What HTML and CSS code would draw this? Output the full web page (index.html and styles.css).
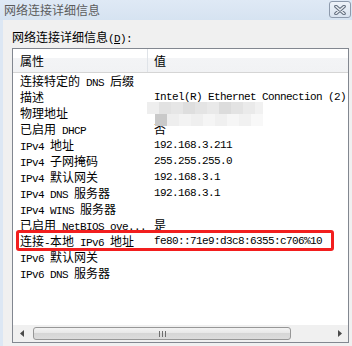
FILE: index.html
```html
<!DOCTYPE html>
<html lang="zh-CN">
<head>
    <meta charset="UTF-8">
    <title>网络连接详细信息</title>
    <link rel="stylesheet" href="styles.css">
</head>
<body>
<div class="window">
    <div class="titlebar">
        <span class="title">网络连接详细信息</span>
        <button class="close">
            <svg width="12" height="10" viewBox="0 0 12 10">
                <path d="M2 1.5 L10 8.5 M10 1.5 L2 8.5" stroke="#5f6b7b" stroke-width="3.6" stroke-linecap="round"/>
                <path d="M2 1.5 L10 8.5 M10 1.5 L2 8.5" stroke="#e9edf2" stroke-width="1.6" stroke-linecap="round"/>
            </svg>
        </button>
    </div>
    <div class="client">
        <div class="label">网络连接详细信息<span class="en">(<u>D</u>):</span></div>
        <div class="list">
            <div class="head">
                <div class="c1">属性</div>
                <div class="c2">值</div>
            </div>
            <div class="rows">
                <div class="row"><div class="name">连接特定的<span class="en"> DNS </span>后缀</div><div class="val"></div></div>
                <div class="row"><div class="name">描述</div><div class="val en">Intel(R) Ethernet Connection (2)</div></div>
                <div class="row"><div class="name">物理地址</div><div class="val"></div></div>
                <div class="row"><div class="name">已启用<span class="en"> DHCP</span></div><div class="val">否</div></div>
                <div class="row"><div class="name"><span class="en">IPv4 </span>地址</div><div class="val en">192.168.3.211</div></div>
                <div class="row"><div class="name"><span class="en">IPv4 </span>子网掩码</div><div class="val en">255.255.255.0</div></div>
                <div class="row"><div class="name"><span class="en">IPv4 </span>默认网关</div><div class="val en">192.168.3.1</div></div>
                <div class="row"><div class="name"><span class="en">IPv4 DNS </span>服务器</div><div class="val en">192.168.3.1</div></div>
                <div class="row"><div class="name"><span class="en">IPv4 WINS </span>服务器</div><div class="val"></div></div>
                <div class="row"><div class="name">已启用<span class="en"> NetBIOS ove...</span></div><div class="val">是</div></div>
                <div class="row"><div class="name">连接<span class="en">-</span>本地<span class="en"> IPv6 </span>地址</div><div class="val en">fe80::71e9:d3c8:6355:c706%10</div></div>
                <div class="row"><div class="name"><span class="en">IPv6 </span>默认网关</div><div class="val"></div></div>
                <div class="row"><div class="name"><span class="en">IPv6 DNS </span>服务器</div><div class="val"></div></div>
            </div>
            <div class="hscroll">
                <div class="arrow">
                    <svg width="4" height="7" viewBox="0 0 4 7"><path d="M4 0 L0 3.5 L4 7 Z" fill="#4a4a4a"/></svg>
                </div>
                <div class="thumb">
                    <svg width="7" height="6" viewBox="0 0 7 6"><path d="M0 0h1v6H0z M3 0h1v6H3z M6 0h1v6H6z" fill="#6e6e6e"/></svg>
                </div>
                <div class="track"></div>
                <div class="arrow">
                    <svg width="4" height="7" viewBox="0 0 4 7"><path d="M0 0 L4 3.5 L0 7 Z" fill="#4a4a4a"/></svg>
                </div>
            </div>

            <!-- blurred MAC address -->
            <svg class="mosaic" width="116" height="24" viewBox="0 0 116 24">
                <rect x="0" y="0" width="12" height="12" fill="#eeeeee"/>
                <rect x="12" y="0" width="12" height="12" fill="#e2e2e2"/>
                <rect x="24" y="0" width="12" height="12" fill="#e6e6e6"/>
                <rect x="36" y="0" width="12" height="12" fill="#dedede"/>
                <rect x="48" y="0" width="12" height="12" fill="#e4e4e4"/>
                <rect x="60" y="0" width="12" height="12" fill="#e9e9e9"/>
                <rect x="72" y="0" width="12" height="12" fill="#dcdcdc"/>
                <rect x="84" y="0" width="12" height="12" fill="#e3e3e3"/>
                <rect x="96" y="0" width="12" height="12" fill="#eaeaea"/>
                <rect x="108" y="0" width="8" height="12" fill="#f1f1f1"/>
                <rect x="8" y="12" width="12" height="12" fill="#c9c9c9"/>
                <rect x="20" y="12" width="12" height="12" fill="#eeeeee"/>
                <rect x="32" y="12" width="12" height="12" fill="#f3f3f3"/>
                <rect x="44" y="12" width="12" height="12" fill="#efefef"/>
                <rect x="56" y="12" width="12" height="12" fill="#f5f5f5"/>
                <rect x="68" y="12" width="12" height="12" fill="#f0f0f0"/>
                <rect x="80" y="12" width="12" height="12" fill="#f6f6f6"/>
                <rect x="92" y="12" width="12" height="12" fill="#f1f1f1"/>
                <rect x="104" y="12" width="12" height="12" fill="#f8f8f8"/>
            </svg>

            <div class="mark"></div>
        </div>
    </div>
</div>
</body>
</html>
```

FILE: styles.css
```css
body {
    margin: 0;
    background-color: #f0f0f0;
    font-family: "Noto Sans CJK SC", sans-serif;
    font-size: 12px;
    color: #000;
}

.window {
    height: 346px;
    display: flex;
    flex-direction: column;
}

.titlebar {
    height: 20px;
    display: flex;
    justify-content: space-between;
    padding: 0 1px 0 4px;
    background: linear-gradient(#dfe9f5, #d6e3f1);
}

.title {
    line-height: 20px;
    color: #5c5c5c;
}

.close {
    width: 22px;
    height: 17px;
    margin-top: 1px;
    padding: 0;
    border: 1px solid #8d9aac;
    border-radius: 3px;
    background: linear-gradient(#eef3f9, #d9e3ef);
    display: flex;
    align-items: center;
    justify-content: center;
}

.client {
    flex: 1;
    border-left: 3px solid #dce7f4;
    padding: 9px 3px 0 9px;
}

.label {
    height: 16px;
    line-height: 16px;
    margin-bottom: 3px;
}

/* latin text: 6px per char like the old bitmap font */
.en {
    font-family: "Liberation Mono", monospace;
    font-size: 11px;
    letter-spacing: -0.6px;
}

.list {
    position: relative;
    width: 337px;
    height: 295px;
    box-sizing: border-box;
    border: 1px solid #828790;
    background-color: #fff;
    display: flex;
    flex-direction: column;
}

.head {
    display: flex;
    height: 23px;
    line-height: 23px;
    border-bottom: 1px solid #d5d5d5;
    background: linear-gradient(#fff 0, #fff 40%, #f3f4f6 40%, #f1f2f4 100%);
}

.head .c1 {
    width: 135px;
    box-sizing: border-box;
    padding-left: 7px;
    border-right: 1px solid #dfe3e8;
}

.head .c2 {
    padding-left: 6px;
}

.rows {
    flex: 1;
}

.row {
    display: flex;
    height: 16px;
    line-height: 16px;
    white-space: nowrap;
}

.name {
    width: 135px;
    box-sizing: border-box;
    padding-left: 7px;
    overflow: hidden;
}

.val {
    flex: 1;
    padding-left: 6px;
    overflow: hidden;
}

.hscroll {
    height: 17px;
    display: flex;
    background-color: #f0f0f0;
}

.arrow {
    width: 17px;
    display: flex;
    align-items: center;
    justify-content: center;
}

.thumb {
    width: 258px;
    height: 13px;
    margin: 2px 0 0 3px;
    box-sizing: border-box;
    border: 1px solid #979797;
    border-radius: 3px;
    background: linear-gradient(#f3f3f3, #e6e6e6 50%, #d6d6d6 50%, #dcdcdc);
    display: flex;
    align-items: center;
    justify-content: center;
}

.track {
    flex: 1;
}

.mosaic {
    position: absolute;
    left: 134px;
    top: 53px;
}

.mark {
    position: absolute;
    left: 3px;
    top: 181px;
    width: 318px;
    height: 21px;
    box-sizing: border-box;
    border: 3px solid #f21e1e;
    border-radius: 3px;
}
```
